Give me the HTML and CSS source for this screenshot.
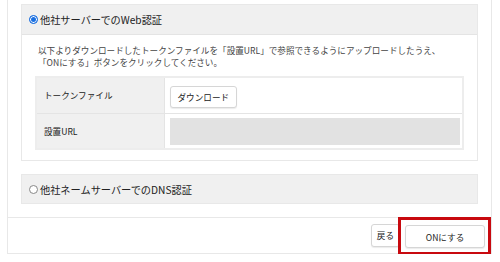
FILE: index.html
```html
<!DOCTYPE html>
<html>
    <head>
        <title>Web認証</title>
        <meta charset="UTF-8">
        <link rel="stylesheet" href="styles.css">
    </head>
    <body>
        <div class="panel">
            <div class="panel-body">
                <!-- Web認証 -->
                <div class="secao">
                    <div class="secao-titulo"><span class="radio marcado"></span>他社サーバーでのWeb認証</div>
                    <div class="secao-corpo">
                        <p class="descricao">以下よりダウンロードしたトークンファイルを「設置URL」で参照できるようにアップロードしたうえ、<br>「ONにする」ボタンをクリックしてください。</p>
                        <table class="tabela">
                            <tr>
                                <th>トークンファイル</th>
                                <td><button class="botao">ダウンロード</button></td>
                            </tr>
                            <tr>
                                <th>設置URL</th>
                                <td class="url"><div class="url-caixa"></div></td>
                            </tr>
                        </table>
                    </div>
                </div>
                <!-- DNS認証 -->
                <div class="secao fechada">
                    <div class="secao-titulo"><span class="radio"></span>他社ネームサーバーでのDNS認証</div>
                </div>
            </div>
            <div class="rodape">
                <button class="botao">戻る</button>
                <div class="destaque">
                    <button class="botao largo">ONにする</button>
                </div>
            </div>
        </div>
    </body>
</html>
```
FILE: styles.css
```css
* {
    margin: 0;
    padding: 0;
    box-sizing: border-box;
    font-family: "Noto Sans CJK JP", "Liberation Sans", sans-serif;
}
body {
    background-color: #fff;
    color: #333;
}
.panel {
    margin: 0 8px 0 7px;
    height: 254px;
    border: 1px solid #e8e8e8;
    border-top: none;
}
.panel-body {
    padding: 4px 13px 13px 13px;
    border-bottom: 1px solid #e8e8e8;
}
.secao {
    border: 1px solid #e8e8e8;
}
.secao + .secao {
    margin-top: 13px;
}
.secao-titulo {
    display: flex;
    align-items: center;
    height: 29px;
    padding-left: 7px;
    background-color: #f0f0f0;
    font-size: 10.2px;
    color: #222;
}
.fechada .secao-titulo {
    height: 28px;
}
.secao-corpo {
    padding: 9px 13px 10px 13px;
    border-top: 1px solid #e4e4e4;
}
.radio {
    display: inline-block;
    width: 9px;
    height: 9px;
    margin-right: 2px;
    border: 1px solid #888;
    border-radius: 50%;
    background-color: #fff;
}
.radio.marcado {
    border-color: #1a6fe0;
    background-color: #1a6fe0;
    box-shadow: inset 0 0 0 1px #fff;
}
.descricao {
    padding-left: 3px;
    font-size: 8.6px;
    line-height: 12px;
    color: #444;
}
.tabela {
    width: 100%;
    margin-top: 8px;
    border-collapse: collapse;
    border: 2px solid #ededed;
}
.tabela th {
    width: 128px;
    padding-left: 7px;
    text-align: left;
    font-weight: normal;
    font-size: 8.6px;
    color: #222;
    background-color: #f0f0f0;
    border-right: 1px solid #e4e4e4;
}
.tabela tr {
    height: 36px;
}
.tabela tr + tr {
    border-top: 1px solid #e4e4e4;
}
.tabela td {
    padding: 0 6px 0 5px;
}
.tabela td.url {
    padding: 4px 2px 3px 5px;
}
.url-caixa {
    height: 27px;
    background-color: #e2e2e2;
}
.botao {
    height: 22px;
    padding: 0 7px;
    font-size: 8.6px;
    color: #222;
    background-color: #fff;
    border: 1px solid #d6d6d6;
    border-radius: 3px;
    box-shadow: 0 1px 1px rgba(0, 0, 0, 0.08);
}
.rodape {
    display: flex;
    justify-content: flex-end;
    align-items: center;
    gap: 5px;
    height: 34px;
    padding-right: 6px;
}
.rodape .botao {
    height: 23px;
    padding: 0 5px;
}
.rodape .botao.largo {
    width: 80px;
}
.destaque {
    position: relative;
}
.destaque::after {
    content: "";
    position: absolute;
    left: -7px;
    right: -6px;
    top: -5px;
    bottom: -7px;
    border: 3px solid #c8090f;
}
```
